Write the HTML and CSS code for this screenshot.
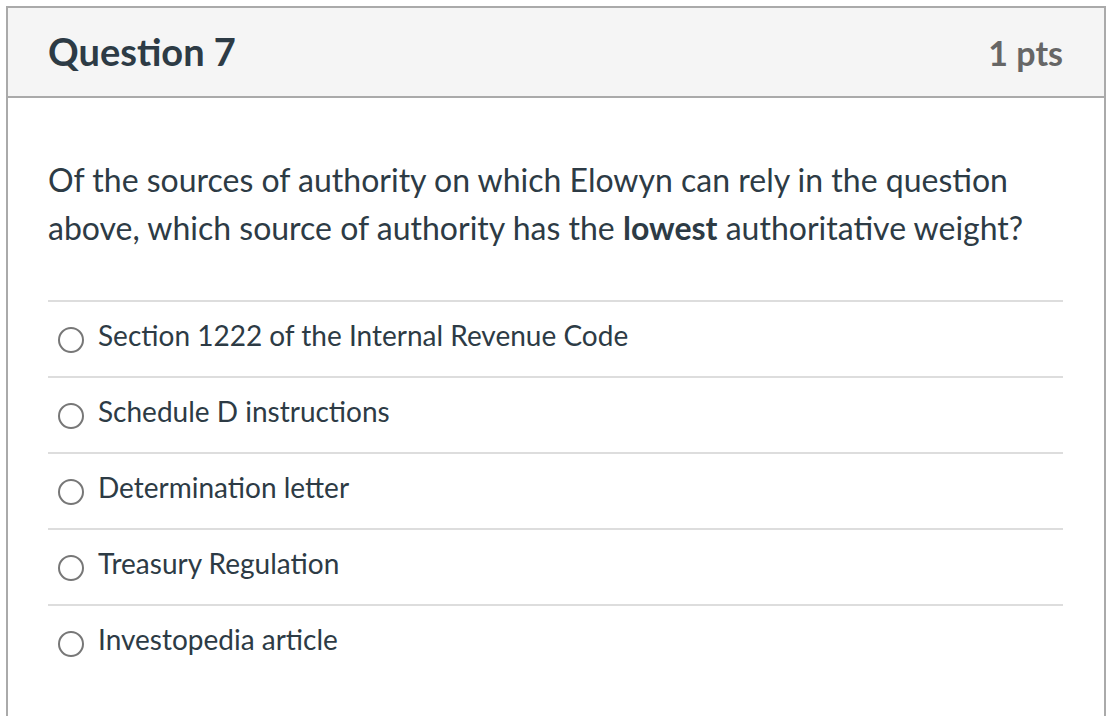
FILE: index.html
```html
<!DOCTYPE html>
<html>
<head>
<meta charset="utf-8">
<link rel="stylesheet" href="styles.css">
</head>
<body>
<div class="question">
  <div class="q-header">
    <h2 class="q-title">Question 7</h2>
    <div class="q-pts">1 pts</div>
  </div>
  <div class="q-body">
    <p class="q-text">Of the sources of authority on which Elowyn can rely in the question above, which source of authority has the <strong>lowest</strong> authoritative weight?</p>
    <div class="answers">
      <label class="answer"><span class="radio"></span><span class="a-text">Section 1222 of the Internal Revenue Code</span></label>
      <label class="answer"><span class="radio"></span><span class="a-text">Schedule D instructions</span></label>
      <label class="answer"><span class="radio"></span><span class="a-text">Determination letter</span></label>
      <label class="answer"><span class="radio"></span><span class="a-text">Treasury Regulation</span></label>
      <label class="answer"><span class="radio"></span><span class="a-text">Investopedia article</span></label>
    </div>
  </div>
</div>
</body>
</html>
```

FILE: styles.css
```css
html, body {
  margin: 0;
  padding: 0;
  background: #fff;
}
body {
  font-family: Lato, "Noto Sans", sans-serif;
  color: #2d3b45;
  padding: 6px 4px 0 6px;
}
.question {
  border: 2px solid #aaaaaa;
  border-bottom: none;
  height: 720px;
  box-sizing: border-box;
}
.q-header {
  display: flex;
  align-items: center;
  justify-content: space-between;
  background: #f5f5f5;
  height: 88px;
  padding: 0 41px 0 40px;
  border-bottom: 2px solid #aaaaaa;
}
.q-title {
  margin: 0;
  font-size: 38px;
  font-weight: 700;
  color: #2d3b45;
  position: relative;
  top: -1px;
}
.q-pts {
  font-size: 34px;
  font-weight: 700;
  color: #666666;
}
.q-body {
  padding: 58px 41px 0 40px;
}
.q-text {
  margin: 0 0 48px;
  font-size: 32px;
  line-height: 48px;
}
.answer {
  display: flex;
  align-items: center;
  gap: 14px;
  height: 74px;
  border-top: 2px solid #dddddd;
  padding-left: 10px;
}
.radio {
  width: 22px;
  height: 22px;
  border: 2px solid #777777;
  border-radius: 50%;
  flex: none;
  position: relative;
  top: 1px;
}
.a-text {
  font-size: 28px;
  position: relative;
  top: -4px;
}
```
